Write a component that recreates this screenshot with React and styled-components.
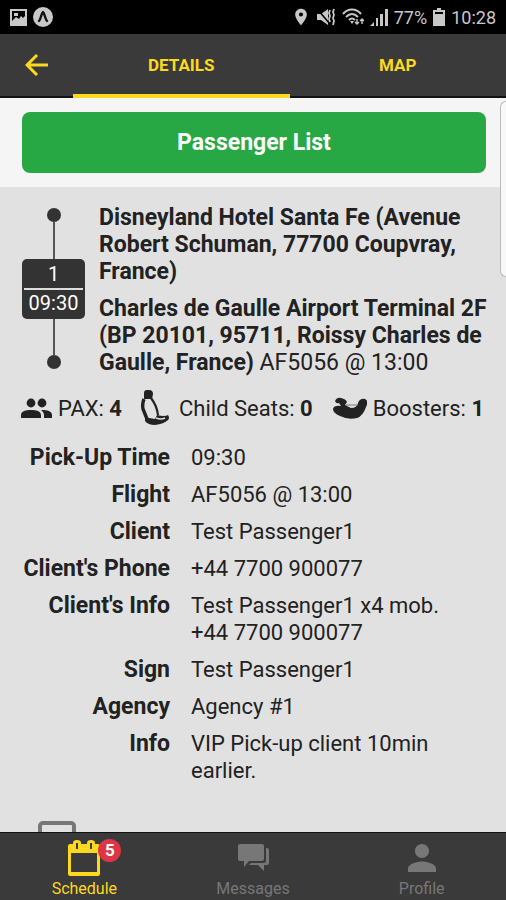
import React from 'react'
import styled, { createGlobalStyle } from 'styled-components'
import { MdPerson, MdLocationOn } from 'react-icons/md'


const details = [
  { label: 'Pick-Up Time', value: '09:30' },
  { label: 'Flight', value: 'AF5056 @ 13:00' },
  { label: 'Client', value: 'Test Passenger1' },
  { label: "Client's Phone", value: '+44 7700 900077' },
  { label: "Client's Info", value: 'Test Passenger1 x4 mob. +44 7700 900077' },
  { label: 'Sign', value: 'Test Passenger1' },
  { label: 'Agency', value: 'Agency #1' },
  { label: 'Info', value: 'VIP Pick-up client 10min earlier.' },
]

function StatusBar() {
  return (
    <Status>
      <StatusGroup>
        <svg width="17" height="17" viewBox="0 0 17 17">
          <path fill="#c8c8c8" fillRule="evenodd" d="M0 0h17v17H0zM2 2v10l4-4 3 2 2-3 2 2 2-2V2zM4 4h4v3H4z" />
        </svg>
        <svg width="20" height="20" viewBox="0 0 20 20">
          <circle cx="10" cy="10" r="10" fill="#c8c8c8" />
          <path d="M6 14c2-2 2-7 4-9 2 2 2 7 4 9" fill="none" stroke="#111" strokeWidth="2.4" strokeLinecap="round" strokeLinejoin="round" />
        </svg>
      </StatusGroup>
      <StatusGroup>
        <MdLocationOn size={20} />
        <svg width="19" height="18" viewBox="0 0 19 18" fill="none" stroke="#c8c8c8">
          <path d="M0 6h4l7-5v16l-7-5H0z" fill="#c8c8c8" stroke="none" />
          <path d="M1 2l12 14" stroke="#000" strokeWidth="1.6" />
          <path d="M13 2l-1 3 1 3-1 3 1 3M17 1l-1 3 1 3-1 3 1 3-1 4" strokeWidth="1.8" />
        </svg>
        <svg width="22" height="18" viewBox="0 0 22 18" fill="none" stroke="#c8c8c8" strokeWidth="2">
          <path d="M1 6c5-6 13-6 18 0M4 9c4-4 8-4 12 0M7 12c2-2 4-2 6 0" />
          <path d="M8 13l2 3 2-3z" fill="#c8c8c8" stroke="none" />
          <path d="M15 11v4m-2-1 2 2 2-2M20 16v-4m-2 1 2-2 2 2" strokeWidth="1.4" />
        </svg>
        <svg width="18" height="18" viewBox="0 0 18 18" fill="#c8c8c8">
          <path d="M0 18l4-4v4zM6 10h2v8H6zM10 6h3v12h-3zM15 1h3v17h-3z" />
        </svg>
        <span>77%</span>
        <svg width="12" height="18" viewBox="0 0 12 18" fill="#c8c8c8">
          <path fillRule="evenodd" d="M4 0h4v2h4v16H0V2h4zM2 4v2h8V4z" />
        </svg>
        <span>10:28</span>
      </StatusGroup>
    </Status>
  )
}

function BackIcon() {
  return (
    <svg width="23" height="22" viewBox="0 0 23 22" fill="none" stroke="currentColor" strokeWidth="3">
      <path d="M12 1L2 11l10 10M2 11h21" />
    </svg>
  )
}

function PeopleIcon() {
  return (
    <svg width="31" height="22" viewBox="0 0 31 22" fill="#222">
      <circle cx="10" cy="6" r="4.4" />
      <circle cx="21" cy="6" r="4.4" />
      <path d="M0 21v-3c0-4 5-5 10-5s10 1 10 5v3zM21 13c5 0 10 1 10 5v3h-8v-3c0-2-1-3-3-5z" />
    </svg>
  )
}

function SeatIcon() {
  return (
    <svg width="28" height="36" viewBox="0 0 28 36" fill="#222">
      <path d="M3 3q0-3 3-3h2q4 0 4 4l-1 5H3z" />
      <path d="M3 9q-2 5-1 10l4 10" fill="none" stroke="#222" strokeWidth="3.4" />
      <path d="M10 8q6 8 7 17" fill="none" stroke="#222" strokeWidth="2.2" />
      <path d="M4 27l4 1 6 1 2-4q8 2 11 0 2 3 0 5-4 4-13 5-7 0-10-4z" />
      <path d="M15 28q5 2 9 0" fill="none" stroke="#e1e1e1" strokeWidth="1.6" />
    </svg>
  )
}

function BoosterIcon() {
  return (
    <svg width="35" height="22" viewBox="0 0 35 22" fill="#222">
      <path d="M3 4Q5 0 9 1q5 1 6 4l-2 3 6 3q6 0 7-5 2-5 7-4 4 2 1 8-3 9-9 11-9 2-17-2-7-3-7-7 1-4 8-3L7 6Q4 7 3 4z" />
      <path d="M14 8h12" stroke="#777" strokeWidth="1" />
    </svg>
  )
}

function CalendarIcon() {
  return (
    <svg width="32" height="36" viewBox="0 0 32 36">
      <path fill="#fcd91e" fillRule="evenodd" d="M2 4h3V3q0-3 4-3t4 3v1h6V3q0-3 4-3t4 3v1h3q2 0 2 2v28q0 2-2 2H2q-2 0-2-2V6q0-2 2-2zM3 13v19h26V13zM8 3v6h2V3zM22 3v6h2V3z" />
    </svg>
  )
}

function MessagesIcon() {
  return (
    <svg width="31" height="28" viewBox="0 0 31 28" fill="#777">
      <path d="M2 0h22q2 0 2 2v13q0 2-2 2H11l-5 6v-6H2q-2 0-2-2V2q0-2 2-2z" />
      <path d="M28 4h1q2 0 2 2v13q0 2-2 2h-3v6l-6-6h-9l2-2h13q2 0 2-2z" />
    </svg>
  )
}

function App() {
  return (
    <Screen>
      <GlobalStyle />
      <StatusBar />
      <Header>
        <BackButton aria-label="Back"><BackIcon /></BackButton>
        <Tab $active>Details</Tab>
        <Tab>Map</Tab>
      </Header>
      <Content>
        <ActionArea>
          <PassengerButton>Passenger List</PassengerButton>
        </ActionArea>

        <Trip>
          <Route>
            <Dot />
            <Line />
            <TimeBox>
              <span>1</span>
              <span>09:30</span>
            </TimeBox>
            <Line />
            <Dot />
          </Route>
          <Places>
            <Place><b>Disneyland Hotel Santa Fe (Avenue Robert Schuman, 77700 Coupvray, France)</b></Place>
            <Place><b>Charles de Gaulle Airport Terminal 2F (BP 20101, 95711, Roissy Charles de Gaulle, France)</b> AF5056 @ 13:00</Place>
          </Places>
        </Trip>

        <Counts>
          <Count><PeopleIcon /><span>PAX: <b>4</b></span></Count>
          <Count $gap={10}><SeatIcon /><span>Child Seats: <b>0</b></span></Count>
          <Count><BoosterIcon /><span>Boosters: <b>1</b></span></Count>
        </Counts>

        <Details>
          <tbody>
            {details.map(({ label, value }) => (
              <tr key={label}>
                <Label scope="row">{label}</Label>
                <Value>{value}</Value>
              </tr>
            ))}
          </tbody>
        </Details>

        <NextSection>
          <svg width="38" height="38" viewBox="0 0 38 38" fill="none" stroke="#777" strokeWidth="4">
            <rect x="2" y="2" width="34" height="34" rx="3" />
          </svg>
        </NextSection>
      </Content>
      <EdgeHandle />

      <BottomNav>
        <NavItem href="#schedule" $active>
          <NavIcon><CalendarIcon /><Badge>5</Badge></NavIcon>
          Schedule
        </NavItem>
        <NavItem href="#messages">
          <NavIcon><MessagesIcon /></NavIcon>
          Messages
        </NavItem>
        <NavItem href="#profile">
          <NavIcon><MdPerson size={42} /></NavIcon>
          Profile
        </NavItem>
      </BottomNav>
    </Screen>
  )
}


const GlobalStyle = createGlobalStyle`
* {
  box-sizing: border-box;
}
body {
  margin: 0;
  font-family: Roboto, "Liberation Sans", sans-serif;
  color: #222;
}
button {
  font-family: inherit;
  border: 0;
  padding: 0;
  cursor: pointer;
}
svg {
  display: block;
  flex-shrink: 0;
}
`

const Screen = styled.div`
height: 100vh;
display: flex;
flex-direction: column;
position: relative;
background: #e1e1e1;
`

const Status = styled.div`
display: flex;
justify-content: space-between;
align-items: center;
height: 34px;
padding: 0 10px;
background: #000;
color: #c8c8c8;
font-size: 18px;
`

const StatusGroup = styled.div`
display: flex;
align-items: center;
gap: 6px;
`

const Header = styled.header`
display: flex;
height: 64px;
flex-shrink: 0;
background: #3a3a3a;
border-bottom: 2px solid #111;
`

const BackButton = styled.button`
display: flex;
align-items: center;
justify-content: center;
width: 73px;
background: none;
color: #fcd91e;
`

const Tab = styled.button`
flex: 1;
margin-bottom: -2px;
padding-top: 2px;
background: none;
color: #fcd91e;
font-size: 17px;
font-weight: 700;
text-transform: uppercase;
border-bottom: 4px solid ${props => props.$active ? '#fcd91e' : 'transparent'};
`

const Content = styled.main`
flex: 1;
min-height: 0;
overflow-y: auto;
scrollbar-width: none;
font-size: 22px;
line-height: 27px;
`

const ActionArea = styled.div`
padding: 14px 20px 14px 22px;
background: #f5f5f5;
`

const PassengerButton = styled.button`
display: block;
width: 100%;
height: 61px;
border-radius: 8px;
background: #28a745;
color: white;
font-size: 23px;
font-weight: 700;
`

const Trip = styled.section`
display: flex;
gap: 14px;
padding: 17px 14px 0 22px;
`

const Route = styled.div`
display: flex;
flex-direction: column;
align-items: center;
width: 63px;
padding: 4px 0 7px;
`

const Dot = styled.div`
width: 14px;
height: 14px;
border-radius: 50%;
background: #333;
`

const Line = styled.div`
flex: 1;
width: 2px;
background: #555;
`

const TimeBox = styled.div`
display: flex;
flex-direction: column;
width: 100%;
padding: 2px;
border-radius: 5px;
background: #333;
color: white;
font-size: 20px;
text-align: center;

span + span {
  border-top: 2px solid #ddd;
}
`

const Places = styled.div`
flex: 1;
font-size: 23px;
`

const Place = styled.p`
margin: 0 0 10px;

&:last-child {
  margin: 0;
}
`

const Counts = styled.div`
display: flex;
justify-content: space-between;
align-items: center;
height: 36px;
margin-top: 14px;
padding: 0 22px 0 21px;
`

const Count = styled.div`
display: flex;
align-items: center;
gap: ${props => props.$gap || 6}px;
`

const Details = styled.table`
width: 100%;
margin-top: 13px;
border-collapse: collapse;
`

const Label = styled.th`
width: 170px;
padding: 5px 0;
font-size: 23px;
text-align: right;
vertical-align: top;
white-space: nowrap;
`

const Value = styled.td`
padding: 5px 40px 5px 21px;
vertical-align: top;
`

const NextSection = styled.div`
padding: 32px 38px;
`

const EdgeHandle = styled.div`
position: absolute;
top: 101px;
right: 0;
width: 6px;
height: 176px;
border: 1px solid #bbb;
border-right: 0;
border-radius: 6px 0 0 6px;
background: #f8f8f8;
`

const BottomNav = styled.nav`
display: flex;
height: 68px;
flex-shrink: 0;
background: #3a3a3a;
border-top: 1px solid #111;
`

const NavItem = styled.a`
flex: 1;
display: flex;
flex-direction: column;
align-items: center;
padding-top: 5px;
color: ${props => props.$active ? '#fcd91e' : '#777'};
font-size: 16px;
line-height: 22px;
text-decoration: none;
`

const NavIcon = styled.span`
position: relative;
display: flex;
align-items: center;
height: 40px;
flex-shrink: 0;
`

const Badge = styled.span`
position: absolute;
left: 30px;
top: 1px;
width: 23px;
height: 23px;
border-radius: 50%;
background: #dc3545;
color: white;
font-size: 17px;
font-weight: 700;
line-height: 23px;
text-align: center;
`

export default App
